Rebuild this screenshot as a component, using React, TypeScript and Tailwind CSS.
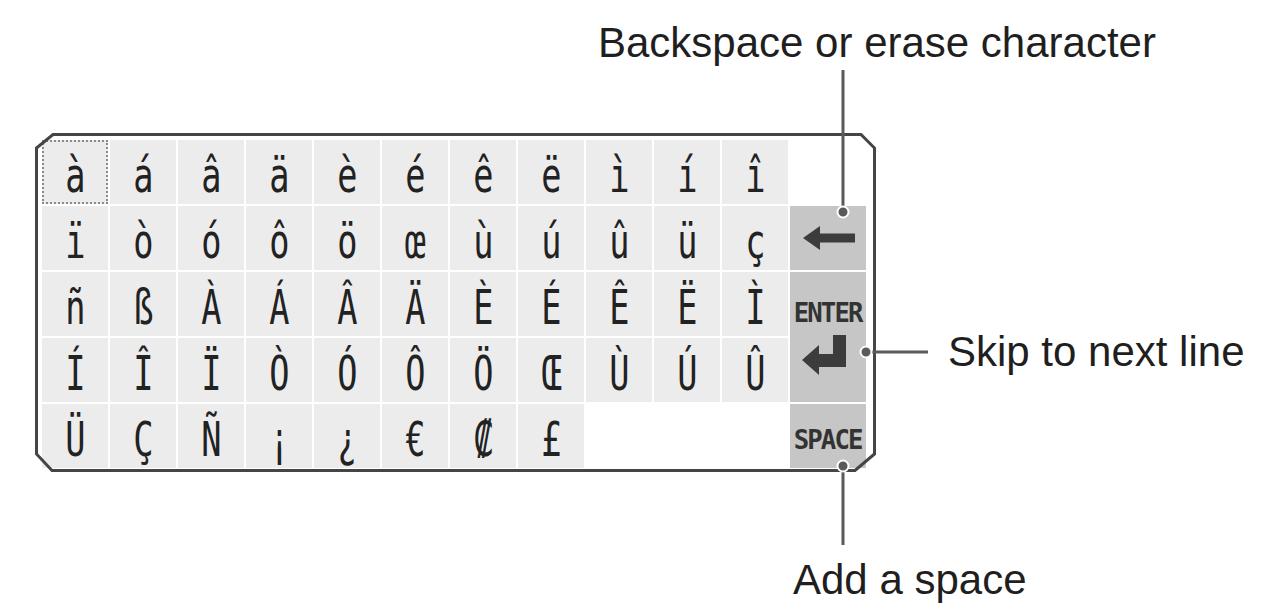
import React from 'react';

const rows: string[][] = [
  ['à', 'á', 'â', 'ä', 'è', 'é', 'ê', 'ë', 'ì', 'í', 'î'],
  ['ï', 'ò', 'ó', 'ô', 'ö', 'œ', 'ù', 'ú', 'û', 'ü', 'ç'],
  ['ñ', 'ß', 'À', 'Á', 'Â', 'Ä', 'È', 'É', 'Ê', 'Ë', 'Ì'],
  ['Í', 'Î', 'Ï', 'Ò', 'Ó', 'Ô', 'Ö', 'Œ', 'Ù', 'Ú', 'Û'],
  ['Ü', 'Ç', 'Ñ', '¡', '¿', '€', '₡', '£'],
];

function CharKey({ ch, active }: { ch: string; active?: boolean }) {
  return (
    <div
      className={
        'flex items-center justify-center bg-[#ececec] pt-[6px] ' +
        (active ? 'border-2 border-dotted border-[#8a8a8a]' : '')
      }
    >
      <span className="inline-block scale-x-[0.7] text-[48px] leading-none text-[#222] [font-family:'DejaVu_Sans_Mono',monospace]">
        {ch}
      </span>
    </div>
  );
}

function BackArrow() {
  return (
    <svg width="54" height="26" viewBox="0 0 54 26">
      <path d="M1 13 L18 1 L18 8.5 L53 8.5 L53 17.5 L18 17.5 L18 25 Z" fill="#3c3c3c" />
    </svg>
  );
}

function EnterArrow() {
  return (
    <svg width="48" height="42" viewBox="0 0 48 42">
      <path d="M32 1 L45 1 L45 33 L18 33 L18 41 L1 26 L18 11 L18 20 L32 20 Z" fill="#3c3c3c" />
    </svg>
  );
}

export default function App() {
  return (
    <div className="relative h-[607px] w-[1276px] overflow-hidden bg-white text-[#1f1f1f] [font-family:'Liberation_Sans',Arial,sans-serif]">
      <div className="pl-[598px] pt-[22px] text-[42px] leading-none">Backspace or erase character</div>

      <div className="mt-[69px] flex items-start">
        {/* keyboard panel */}
        <div className="relative ml-[35px] h-[339px] w-[841px] pl-[7px] pt-[7px]">
          <div className="grid grid-cols-[repeat(11,66px)_76px] grid-rows-[repeat(5,64px)] gap-[2px]">
            {rows[0].map((c, i) => (
              <CharKey key={'r0' + i} ch={c} active={i === 0} />
            ))}
            <div />
            {rows[1].map((c, i) => (
              <CharKey key={'r1' + i} ch={c} />
            ))}
            <div className="flex items-center justify-center bg-[#c6c6c6] pl-[2px]">
              <BackArrow />
            </div>
            {rows[2].map((c, i) => (
              <CharKey key={'r2' + i} ch={c} />
            ))}
            <div className="row-span-2 flex flex-col items-center bg-[#c6c6c6] pt-[27px]">
              <span className="inline-block scale-x-[0.95] text-[27px] font-bold leading-none tracking-[-2px] text-[#333] [font-family:'DejaVu_Sans_Mono',monospace]">
                ENTER
              </span>
              <div className="mt-[8px] pr-[6px]">
                <EnterArrow />
              </div>
            </div>
            {rows[3].map((c, i) => (
              <CharKey key={'r3' + i} ch={c} />
            ))}
            {rows[4].map((c, i) => (
              <CharKey key={'r4' + i} ch={c} />
            ))}
            <div />
            <div />
            <div />
            <div className="flex items-center justify-center bg-[#c6c6c6] pt-[6px]">
              <span className="inline-block scale-x-[0.95] text-[27px] font-bold leading-none tracking-[-2px] text-[#333] [font-family:'DejaVu_Sans_Mono',monospace]">
                SPACE
              </span>
            </div>
          </div>

          {/* chamfered frame */}
          <svg className="pointer-events-none absolute inset-0" width="841" height="339" viewBox="0 0 841 339">
            <polygon
              points="18,1.5 826,1.5 839.5,15 839.5,321 820,337.5 17,337.5 1.5,321 1.5,15"
              fill="none"
              stroke="#454545"
              strokeWidth="3"
            />
          </svg>
        </div>

        <div className="ml-[72px] mt-[198px] text-[42px] leading-none">Skip to next line</div>
      </div>

      <div className="mt-[87px] pl-[793px] text-[42px] leading-none">Add a space</div>

      {/* callout leaders */}
      <svg className="pointer-events-none absolute inset-0" width="1276" height="607" viewBox="0 0 1276 607">
        <g stroke="#5a5a5a" strokeWidth="3" fill="none">
          <line x1="843" y1="70" x2="843" y2="212" />
          <line x1="866" y1="352" x2="928" y2="352" />
          <line x1="843" y1="466" x2="843" y2="545" />
        </g>
        <g fill="#5a5a5a" stroke="#ffffff" strokeWidth="2">
          <circle cx="843" cy="212" r="5.5" />
          <circle cx="866" cy="352" r="5.5" />
          <circle cx="843" cy="466" r="5.5" />
        </g>
      </svg>
    </div>
  );
}
